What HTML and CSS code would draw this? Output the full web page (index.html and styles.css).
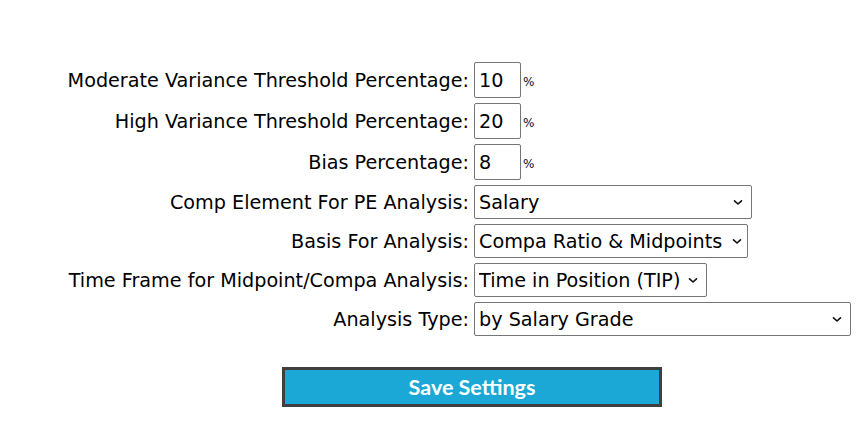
FILE: index.html
```html
<!DOCTYPE html>
<html>
<head>
<meta charset="utf-8">
<link rel="stylesheet" href="styles.css">
</head>
<body>
<form class="settings">
  <div class="grid">
    <label class="lbl">Moderate Variance Threshold Percentage:</label>
    <div class="field"><input class="num" type="text" value="10"><span class="pct">%</span></div>

    <label class="lbl">High Variance Threshold Percentage:</label>
    <div class="field"><input class="num" type="text" value="20"><span class="pct">%</span></div>

    <label class="lbl">Bias Percentage:</label>
    <div class="field"><input class="num" type="text" value="8"><span class="pct">%</span></div>

    <label class="lbl">Comp Element For PE Analysis:</label>
    <div class="field"><select class="sel w-salary"><option>Salary</option></select></div>

    <label class="lbl">Basis For Analysis:</label>
    <div class="field"><select class="sel w-basis tight"><option>Compa Ratio &amp; Midpoints</option></select></div>

    <label class="lbl">Time Frame for Midpoint/Compa Analysis:</label>
    <div class="field"><select class="sel w-tip"><option>Time in Position (TIP)</option></select></div>

    <label class="lbl">Analysis Type:</label>
    <div class="field"><select class="sel w-type"><option>by Salary Grade</option></select></div>
  </div>
  <div class="actions">
    <button type="button" class="save">Save Settings</button>
  </div>
</form>
</body>
</html>
```

FILE: styles.css
```css
html, body {
  margin: 0;
  padding: 0;
  background: #ffffff;
}
body {
  font-family: "DejaVu Sans", "Noto Sans", sans-serif;
  color: #000;
}
.settings {
  padding-top: 62px;
}
.grid {
  display: grid;
  grid-template-columns: 469px auto;
  grid-template-rows: 36px 36px 36px 34px 34px 34px 34px;
  column-gap: 5px;
  row-gap: 5px;
  align-items: center;
}
.lbl {
  text-align: right;
  font-size: 19.2px;
  white-space: nowrap;
}
.field {
  display: flex;
  align-items: center;
  height: 100%;
}
.num {
  box-sizing: border-box;
  width: 47px;
  height: 36px;
  border: 1px solid #767676;
  border-radius: 2px;
  padding: 0 4px;
  font-family: "DejaVu Sans", sans-serif;
  font-size: 19.2px;
  color: #000;
  margin: 0;
}
.pct {
  font-size: 12px;
  color: #0a0a30;
  margin-left: 2px;
  margin-top: 4px;
}
.sel {
  box-sizing: border-box;
  -webkit-appearance: none;
  appearance: none;
  height: 34px;
  border: 1px solid #767676;
  border-radius: 2px;
  padding: 0 20px 0 4px;
  margin: 0;
  font-family: "DejaVu Sans", sans-serif;
  font-size: 19.2px;
  color: #000;
  background-color: #fff;
  background-image: url("data:image/svg+xml;utf8,<svg xmlns='http://www.w3.org/2000/svg' width='10' height='7' viewBox='0 0 10 7'><path d='M1.5 1.8 L5 5 L8.5 1.8' fill='none' stroke='%23111' stroke-width='1.6' stroke-linecap='round' stroke-linejoin='round'/></svg>");
  background-repeat: no-repeat;
  background-position: right 8px center;
  background-size: 10px 7px;
}
.sel.tight {
  background-position: right 5px center;
}
.w-salary { width: 278px; }
.w-basis { width: 274px; }
.w-tip { width: 233px; }
.w-type { width: 377px; }
.actions {
  padding-top: 31px;
  padding-left: 282px;
}
.save {
  box-sizing: border-box;
  width: 380px;
  height: 40px;
  background: #1ba8d6;
  border: 3px solid #3f3f3f;
  border-radius: 0;
  color: #fff;
  font-family: Lato, "DejaVu Sans", sans-serif;
  font-weight: bold;
  font-size: 21.5px;
  margin: 0;
  padding: 0;
}
```
